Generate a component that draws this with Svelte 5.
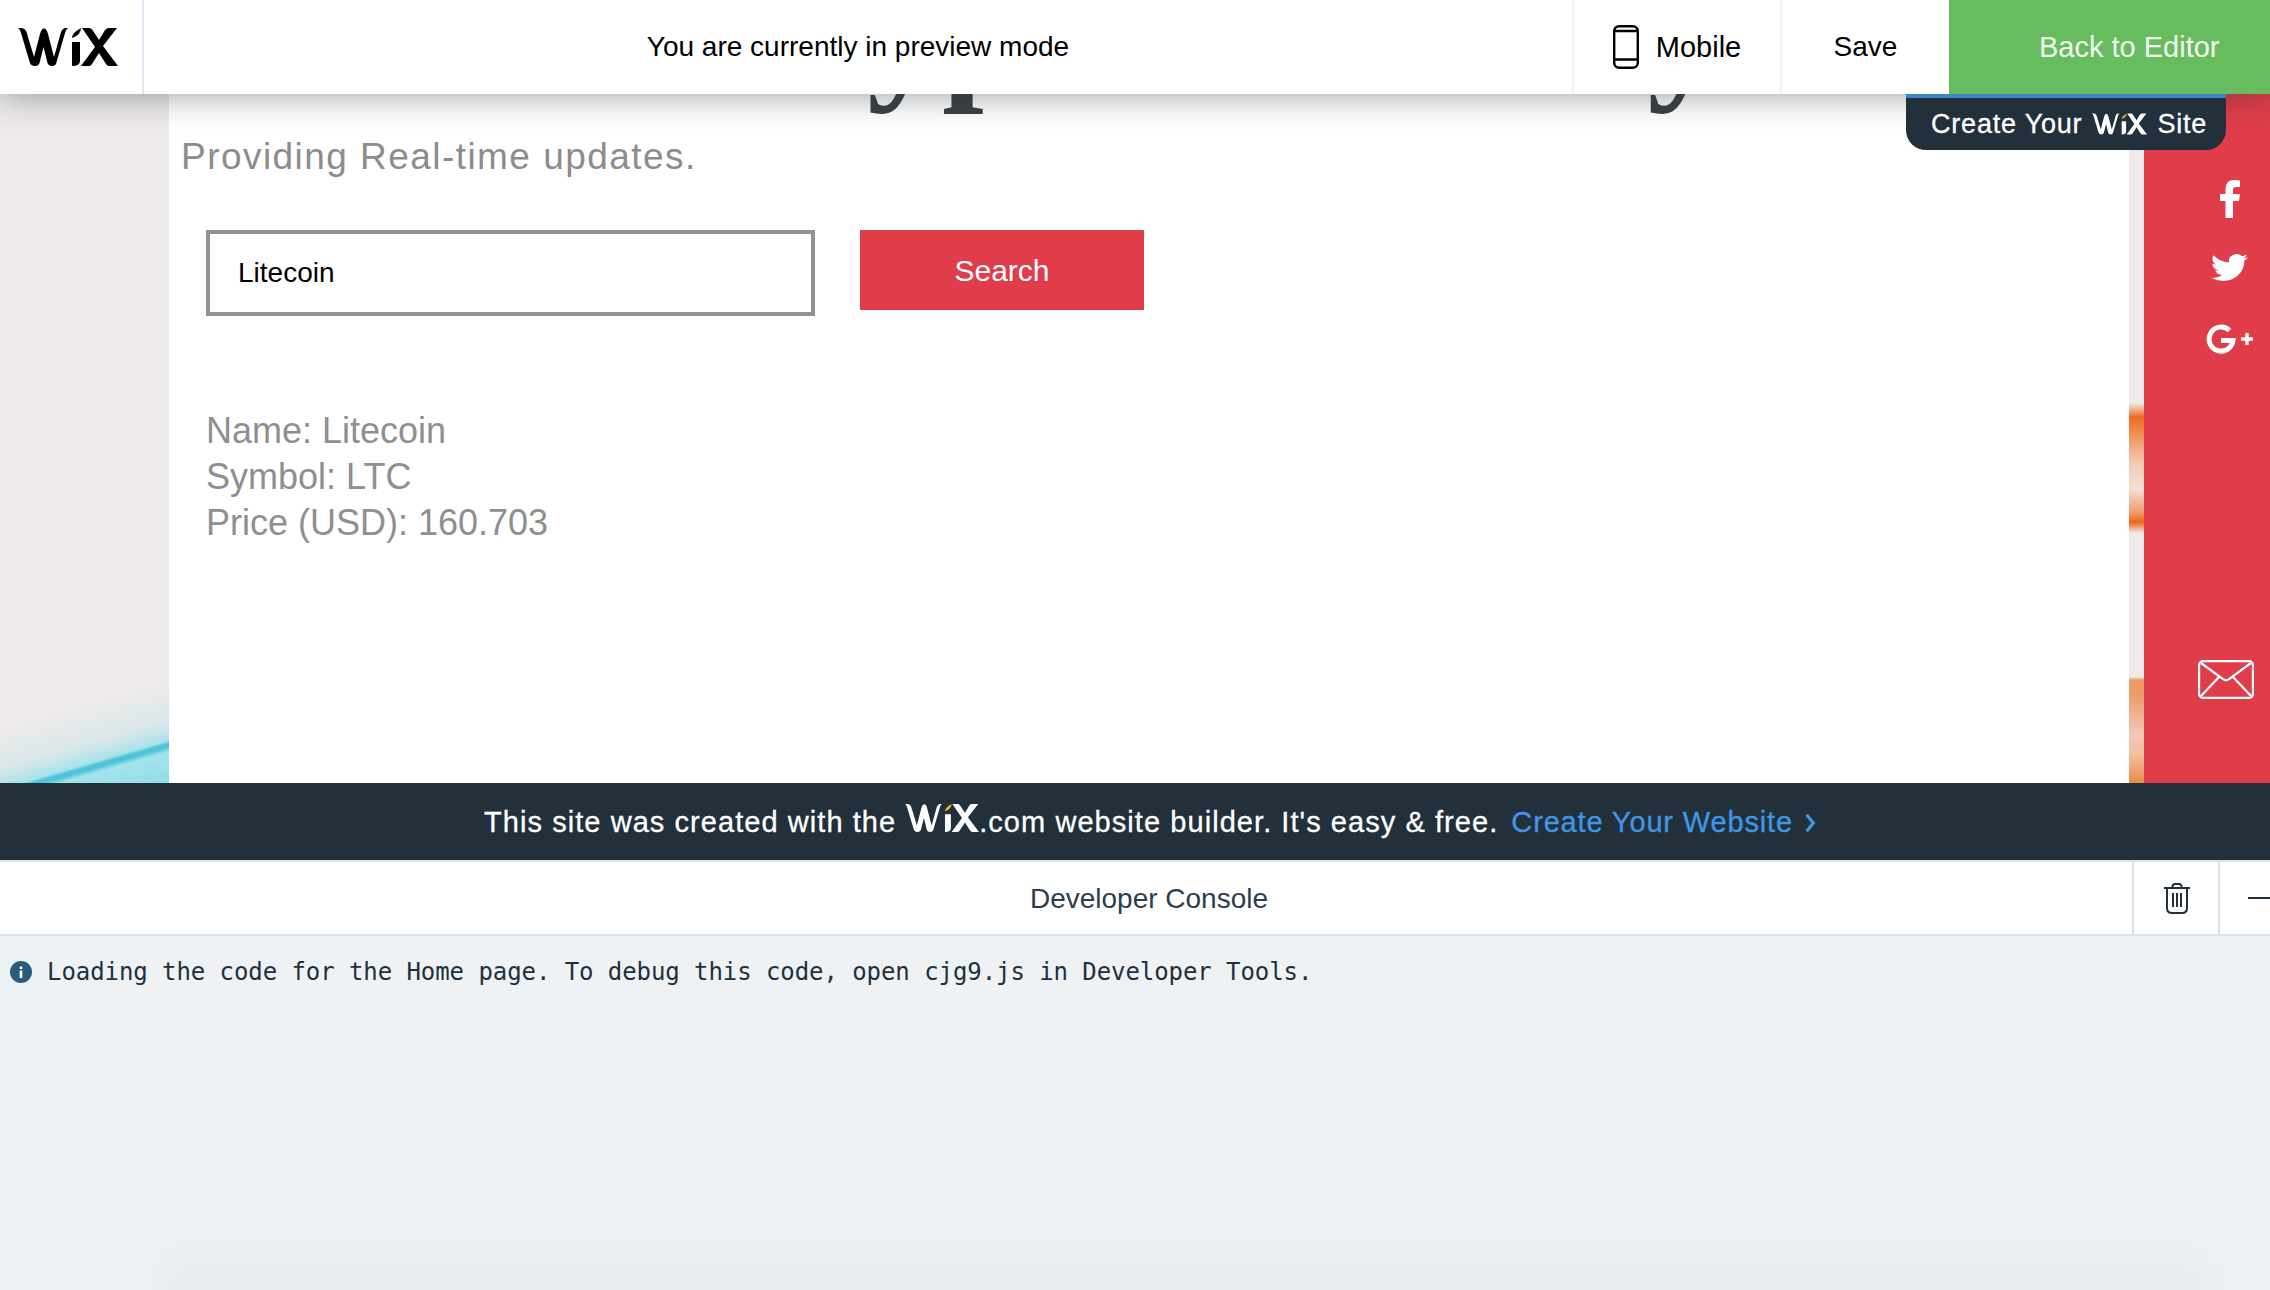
<script>
  let coin = $state('Litecoin');
  const results = [
    { label: 'Name', value: 'Litecoin' },
    { label: 'Symbol', value: 'LTC' },
    { label: 'Price (USD)', value: '160.703' }
  ];
  const logMessage = 'Loading the code for the Home page. To debug this code, open cjg9.js in Developer Tools.';
</script>

{#snippet wixLogo(cls, dot)}
  <svg class={cls} viewBox="0 0 100 40" aria-label="Wix">
    <path fill="currentColor" d="M0 1H3Q7 1 8.500 5L16 30L22 7Q23.500 1.500 26 1.500Q28.500 1.500 30 7L36 30L43 5Q44 2 47 1H50Q48 2 47 6L38 37Q37 39 34 39Q30.500 39 29.500 36L25.500 20L21.500 36Q20.500 39 17 39Q13 39 12 36L3 6Q2 2 0 1Z" />
    <path fill="currentColor" d="M54 15H62V34Q62 39 54 39Z" />
    <path fill={dot} d="M54 11Q54 6 63 1Q63 8 54 11Z" />
    <path fill="currentColor" d="M64 1H71Q73 1 74.500 3L81 13L87 3Q88.500 1 91 1H99L85 19L100 39H91Q89 39 88 37L81 26L74 37Q73 39 71 39H63L77 20Z" />
  </svg>
{/snippet}

<div class="page">
  <header class="topbar">
    <div class="logo-cell">{@render wixLogo('logo-top', 'currentColor')}</div>
    <div class="preview-msg">You are currently in preview mode</div>
    <button class="bar-btn mobile-btn">
      <svg class="phone" viewBox="0 0 26 44" fill="none" stroke="#000" stroke-width="2.400">
        <rect x="1.200" y="1.200" width="23.600" height="41.600" rx="5" />
        <path d="M1.200 6H24.800M1.200 34.500H24.800" />
      </svg>
      Mobile
    </button>
    <button class="bar-btn save-btn">Save</button>
    <button class="back-btn">Back to Editor</button>
  </header>

  <section class="site">
    <div class="side-left"></div>
    <main class="content">
      <h1>Cryptocurrency</h1>
      <p class="tagline">Providing Real-time updates.</p>
      <div class="search-row">
        <input class="search-input" bind:value={coin} />
        <button class="search-btn">Search</button>
      </div>
      <div class="results">
        {#each results as r}
          <div>{r.label}: {r.value}</div>
        {/each}
      </div>
    </main>
    <div class="side-right"></div>
    <aside class="social">
      <svg class="ic-fb" viewBox="0 0 20 38"><path fill="#fff" d="M13 38V21H19L20 14H13V10Q13 7 16 7H20V0.500Q17 0 14 0Q5.500 0 5.500 9V14H0V21H5.500V38Z" /></svg>
      <svg class="ic-tw" viewBox="0 0 24 24" preserveAspectRatio="none"><path fill="#fff" d="M23.953 4.570a10 10 0 01-2.825.775 4.958 4.958 0 002.163-2.723c-.951.555-2.005.959-3.127 1.184a4.920 4.920 0 00-8.384 4.482C7.690 8.095 4.067 6.130 1.640 3.162a4.822 4.822 0 00-.666 2.475c0 1.710.870 3.213 2.188 4.096a4.904 4.904 0 01-2.228-.616v.060a4.923 4.923 0 003.946 4.827 4.996 4.996 0 01-2.212.085 4.936 4.936 0 004.604 3.417 9.867 9.867 0 01-6.102 2.105c-.390 0-.779-.023-1.170-.067a13.995 13.995 0 007.557 2.209c9.053 0 13.998-7.496 13.998-13.985 0-.210 0-.420-.015-.630A9.935 9.935 0 0024 4.590z" /></svg>
      <svg class="ic-gp" viewBox="0 0 47 30" fill="none" stroke="#fff">
        <path stroke-width="5" d="M23.500 6.500A12 12 0 1 0 27 16.500H15" />
        <path stroke-width="3.400" d="M35 15H47M41 9V21" />
      </svg>
      <svg class="ic-mail" viewBox="0 0 56 39" fill="none" stroke="#fff" stroke-width="2.200">
        <rect x="1.100" y="1.100" width="53.800" height="36.800" rx="4" />
        <path d="M3 3L25 19Q28 21.500 31 19L53 3M3 36L21 17M53 36L35 17" />
      </svg>
    </aside>
    <a class="create-badge" href="#top">
      <span>Create Your</span>
      {@render wixLogo('logo-badge', '#f0b429')}
      <span>Site</span>
    </a>
  </section>

  <div class="banner">
    <span>This site was created with the</span>
    {@render wixLogo('logo-banner', '#f0b429')}
    <span class="dotcom">.com website builder. It's easy &amp; free.</span>
    <a class="banner-link" href="#top">Create Your Website
      <svg class="chevron" viewBox="0 0 10 18" fill="none" stroke="currentColor" stroke-width="2.800"><path d="M2 1.500L8 9L2 16.500" /></svg>
    </a>
  </div>

  <section class="console">
    <div class="console-head">
      <div class="console-title">Developer Console</div>
      <button class="console-btn trash-btn" aria-label="Clear">
        <svg class="trash" viewBox="0 0 26 31" fill="none" stroke="#22303c" stroke-width="2">
          <path d="M0 5H26M3 5V25Q3 30 8 30H18Q23 30 23 25V5M8.500 5V3.500Q8.500 1 11 1H15Q17.500 1 17.500 3.500V5" />
          <path d="M9 10V24M13 10V24M17 10V24" />
        </svg>
      </button>
      <button class="console-btn min-btn" aria-label="Minimize"><span class="minus"></span></button>
    </div>
    <div class="console-body">
      <svg class="info" viewBox="0 0 22 22">
        <circle cx="11" cy="11" r="11" fill="#2b5b7e" />
        <path fill="#fff" d="M9.700 5.500h2.600v2.400H9.700zM9.700 9.500h2.600v7.500H9.700z" />
      </svg>
      <span>{logMessage}</span>
    </div>
  </section>
</div>

<style>
  :global(body) {
    margin: 0;
    background: #fff;
  }

  .page {
    width: 2270px;
    height: 1290px;
    display: flex;
    flex-direction: column;
    overflow: hidden;
    font-family: 'Liberation Sans', Arial, sans-serif;
  }

  button {
    border: none;
    background: none;
    padding: 0;
    font: inherit;
    cursor: pointer;
  }

  /* top bar */
  .topbar {
    position: relative;
    z-index: 3;
    flex: 0 0 94px;
    display: flex;
    align-items: stretch;
    background: #fff;
    box-shadow: 0 0 34px rgba(40, 50, 60, 0.5);
    font-size: 29px;
    color: #000;
  }

  .logo-cell {
    width: 124px;
    border-right: 2px solid #e1e8f6;
    display: flex;
    align-items: center;
    padding-left: 18px;
  }

  .logo-top {
    width: 100px;
    height: 40px;
    color: #000;
  }

  .preview-msg {
    flex: 1;
    display: flex;
    align-items: center;
    justify-content: center;
    font-size: 28px;
  }

  .bar-btn {
    color: #000;
    border-left: 2px solid #e9f3f8;
    display: flex;
    align-items: center;
    justify-content: center;
  }

  .mobile-btn {
    width: 208px;
    gap: 17px;
  }

  .phone {
    width: 26px;
    height: 44px;
  }

  .save-btn {
    width: 169px;
    font-size: 28px;
  }

  .back-btn {
    width: 321px;
    background: #66bc5e;
    color: #f2fbef;
    text-align: left;
    padding-left: 90px;
    box-sizing: border-box;
  }

  /* site preview */
  .site {
    position: relative;
    flex: 0 0 689px;
    display: flex;
  }

  .side-left {
    width: 169px;
    background: linear-gradient(164deg, #eeeae9 0, #eeeae9 610px, #d8e8ea 650px, #a8e2ea 668px, #4cc4d9 671px, #4cc4d9 674px, #a5e3ec 679px, #8fdde8 100%);
  }

  .content {
    flex: 1;
    min-width: 0;
    background: #fff;
  }

  h1 {
    margin: -63px 0 0 523px;
    height: 87px;
    line-height: 0;
    font-family: 'Liberation Serif', serif;
    font-size: 150px;
    font-weight: 700;
    color: #3c3f41;
    white-space: nowrap;
  }

  .tagline {
    margin: 19px 0 0 12px;
    font-size: 37px;
    line-height: 40px;
    letter-spacing: 1.450px;
    color: #8c8c8c;
  }

  .search-row {
    display: flex;
    align-items: flex-start;
    gap: 45px;
    margin: 53px 0 0 37px;
  }

  .search-input {
    width: 609px;
    height: 86px;
    box-sizing: border-box;
    border: 4px solid #929292;
    border-radius: 0;
    padding: 0 28px;
    outline: none;
    font: inherit;
    font-size: 28px;
    color: #000;
    background: #fff;
  }

  .search-btn {
    width: 284px;
    height: 80px;
    padding-top: 2px;
    background: #e03c49;
    color: #fff;
    font-size: 30px;
  }

  .results {
    margin: 92px 0 0 37px;
    font-size: 36px;
    line-height: 46px;
    color: #8f8f8f;
  }

  .side-right {
    width: 15px;
    background: linear-gradient(180deg, #eeeae9 0, #eeeae9 309px, #ec6d22 323px, #ef9a66 345px, #f4cdb5 370px, #f3e0d5 395px, #f09560 420px, #ec6418 428px, #f0e8e4 439px, #eeeae9 442px, #eeeae9 583px, #ee9a60 586px, #ec9a68 600px, #f1c8b5 640px, #f0c0a0 660px, #ea8c48 689px);
  }

  .social {
    position: relative;
    flex: 0 0 126px;
    background: #e03c49;
  }

  .social svg {
    position: absolute;
  }

  .ic-fb {
    left: 76px;
    top: 86px;
    width: 20px;
    height: 38px;
  }

  .ic-tw {
    left: 67px;
    top: 157px;
    width: 37px;
    height: 33px;
  }

  .ic-gp {
    left: 62px;
    top: 230px;
    width: 47px;
    height: 30px;
  }

  .ic-mail {
    left: 54px;
    top: 566px;
    width: 56px;
    height: 39px;
  }

  .create-badge {
    position: absolute;
    z-index: 4;
    top: 0;
    left: 1906px;
    width: 320px;
    height: 56px;
    box-sizing: border-box;
    padding-left: 25px;
    display: flex;
    align-items: center;
    gap: 10px;
    background: #22303c;
    border-top: 4px solid #3d85c6;
    border-radius: 0 0 20px 20px;
    color: #fff;
    font-size: 27px;
    letter-spacing: 0.8px;
    -webkit-text-stroke: 0.3px #fff;
    text-decoration: none;
  }

  .logo-badge {
    width: 55px;
    height: 22px;
    color: #fff;
  }

  /* banner */
  .banner {
    flex: 0 0 77px;
    display: flex;
    align-items: center;
    padding-left: 484px;
    background: #22303c;
    color: #fff;
    font-size: 29px;
    letter-spacing: 1.060px;
    -webkit-text-stroke: 0.3px currentColor;
    border-bottom: 2px solid #d9e4ea;
  }

  .banner span,
  .banner-link {
    padding-top: 2px;
  }

  .logo-banner {
    width: 74px;
    height: 30px;
    margin: -8px 0 0 9px;
    color: #fff;
  }

  .banner-link {
    margin-left: 13px;
    color: #3f97e6;
    letter-spacing: 0.85px;
    text-decoration: none;
    display: flex;
    align-items: center;
    gap: 11px;
  }

  .chevron {
    width: 12px;
    height: 20px;
  }

  /* console */
  .console {
    position: relative;
    flex: 1;
    display: flex;
    flex-direction: column;
    background: #eff2f5;
  }

  .console::after {
    content: '';
    position: absolute;
    left: 160px;
    right: 60px;
    bottom: -30px;
    height: 70px;
    background: rgba(0, 0, 0, 0.025);
    filter: blur(20px);
  }

  .console-head {
    flex: 0 0 72px;
    display: flex;
    background: #fff;
    border-bottom: 2px solid #d9e4ea;
  }

  .console-title {
    width: 2132px;
    box-sizing: border-box;
    padding: 2px 0 0 166px;
    display: flex;
    align-items: center;
    justify-content: center;
    font-size: 28px;
    color: #2b3e50;
  }

  .console-btn {
    border-left: 2px solid #d9e4ea;
    display: flex;
    align-items: center;
  }

  .trash-btn {
    width: 86px;
    padding-left: 2px;
    box-sizing: border-box;
    justify-content: center;
  }

  .trash {
    width: 26px;
    height: 31px;
  }

  .min-btn {
    flex: 1;
    padding-left: 28px;
  }

  .minus {
    width: 22px;
    height: 2px;
    background: #22303c;
  }

  .console-body {
    display: flex;
    align-items: center;
    gap: 15px;
    padding: 21px 0 0 10px;
    font-family: 'DejaVu Sans Mono', monospace;
    font-size: 24px;
    letter-spacing: -0.07px;
    line-height: 30px;
    color: #20303c;
    white-space: pre;
  }

  .info {
    width: 22px;
    height: 22px;
  }
</style>
